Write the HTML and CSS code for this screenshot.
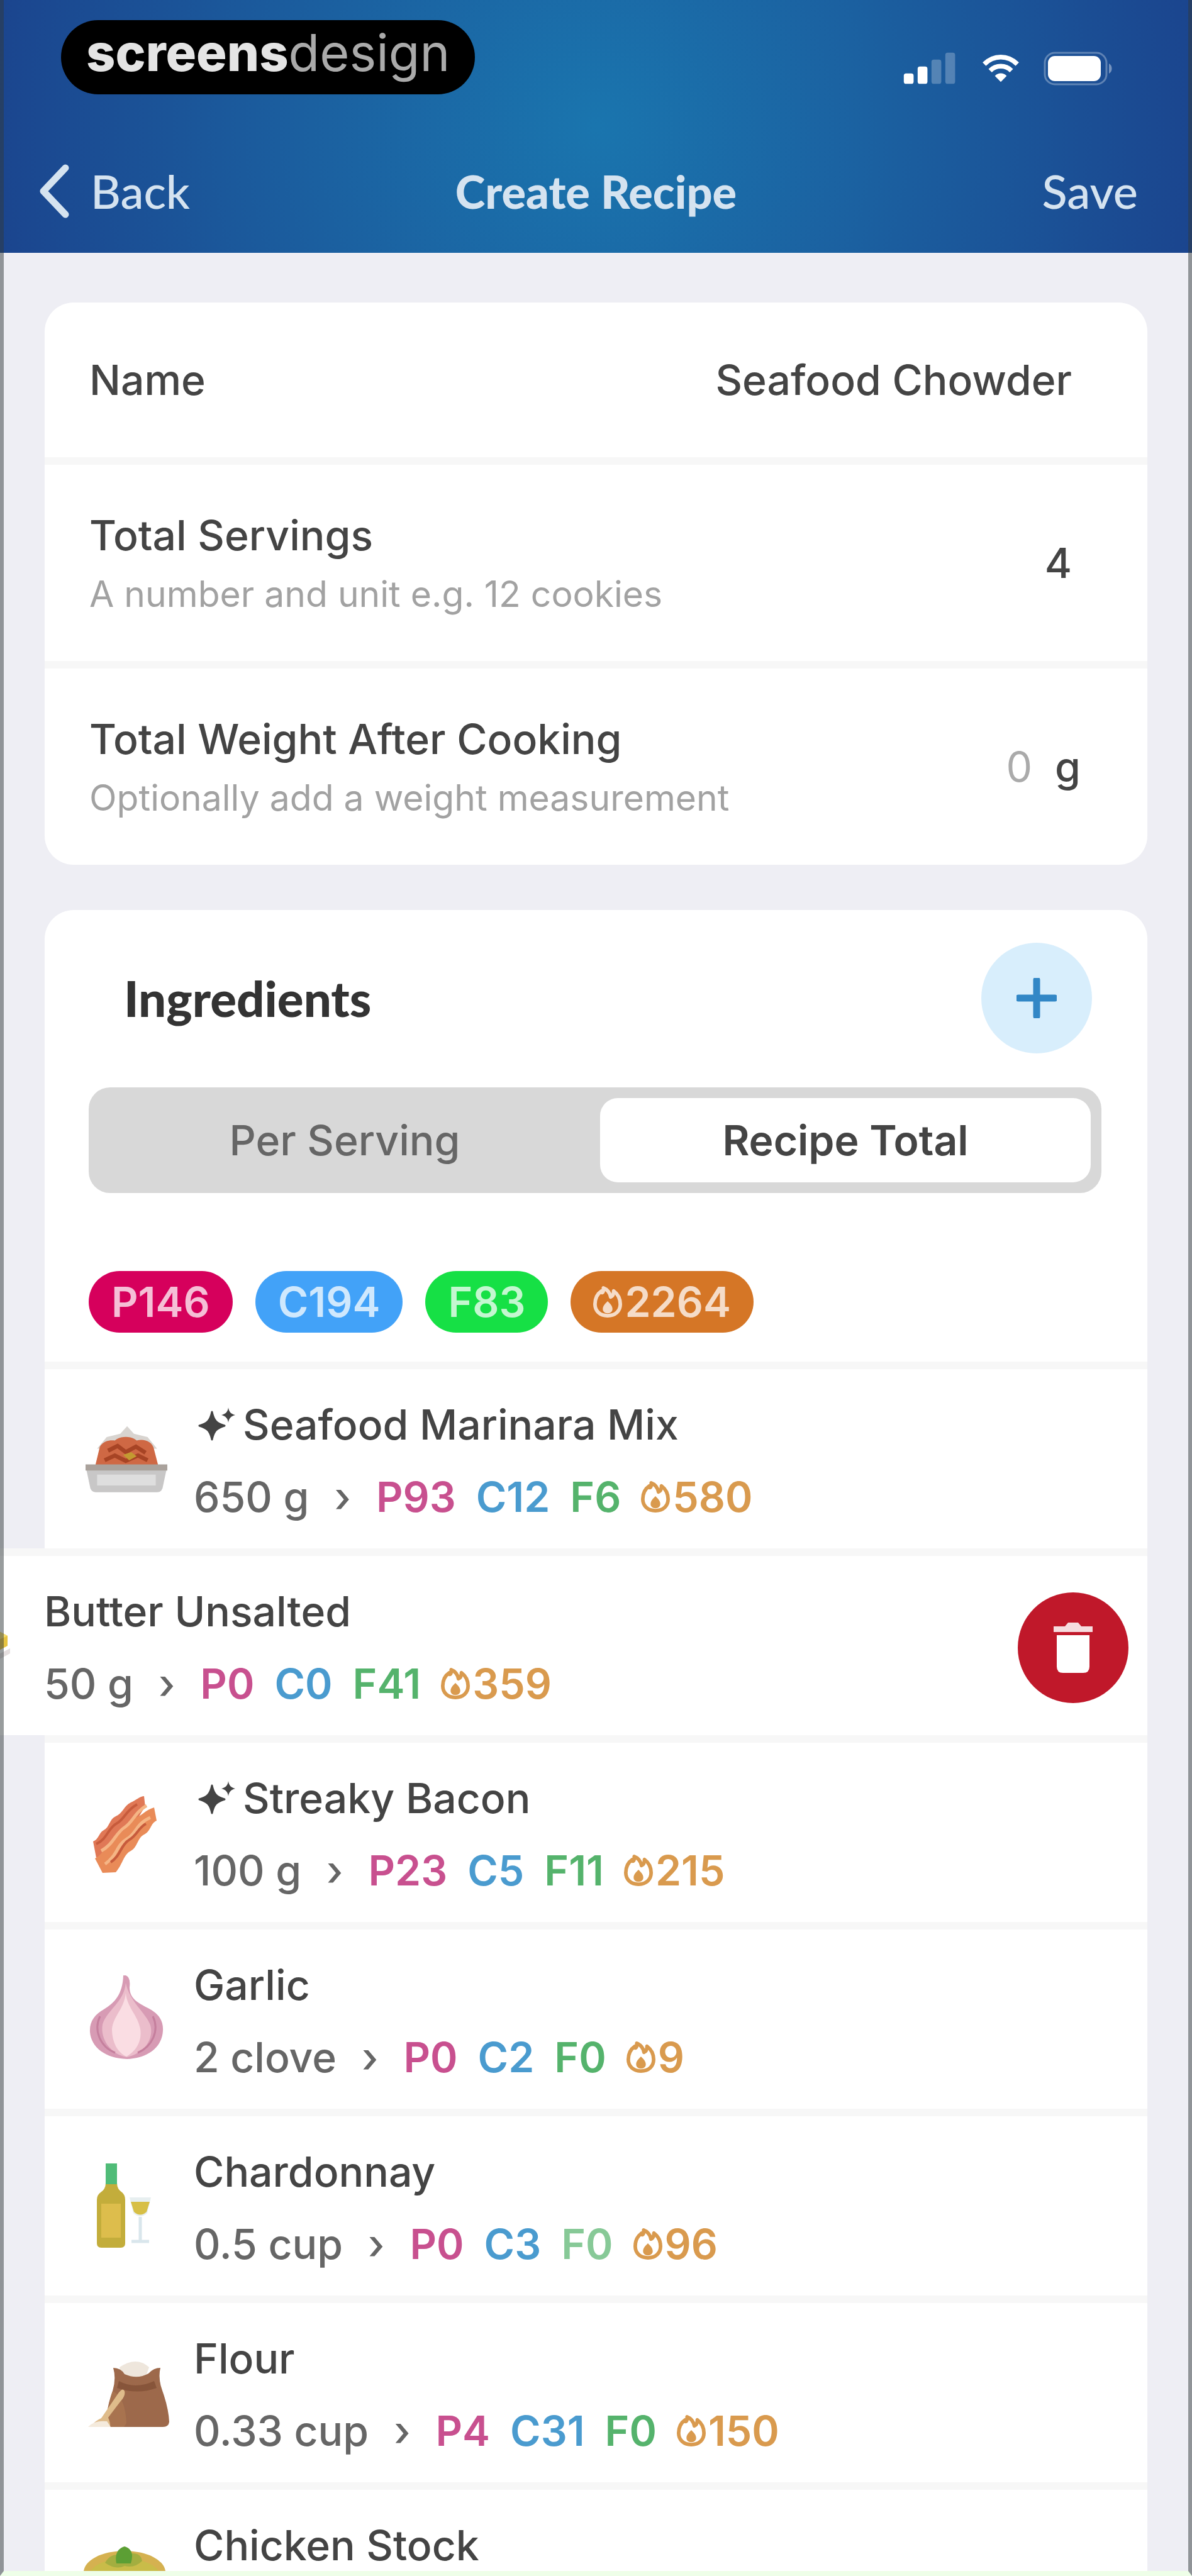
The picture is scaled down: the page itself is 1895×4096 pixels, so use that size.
FILE: index.html
```html
<!DOCTYPE html>
<html lang="en">
<head>
  <meta charset="UTF-8" />
  <meta name="viewport" content="width=device-width, initial-scale=1.0" />
  <title>Create Recipe</title>
  <link rel="stylesheet" href="styles.css">
</head>
<body>
  <!-- shared icons -->
  <svg class="sprite" aria-hidden="true">
    <symbol id="kcal" viewBox="0 0 48 52">
      <path d="M14 8C5 14 3 22 3 30c0 11 8 19 21 19s21-8 21-19c0-8-3-16-11-22 0 6-2 9-5 10C28 11 23 5 17 3c1 8-4 10-3 5z" fill="none" stroke="currentColor" stroke-width="6" stroke-linejoin="round" />
      <path d="M24 25c-5 5-8 8-8 13 0 4 3 7 8 7s8-3 8-7c0-5-3-8-8-13z" fill="currentColor" />
    </symbol>
    <symbol id="sparkle" viewBox="0 0 64 56">
      <path d="M25 8c3 14 7 18 20 22-13 4-17 8-20 22-3-14-7-18-20-22 13-4 17-8 20-22z" fill="currentColor" stroke="currentColor" stroke-width="3" stroke-linejoin="round" />
      <path d="M51 1c1 7 4 10 11 12-7 2-10 5-11 12-1-7-4-10-11-12 7-2 10-5 11-12z" fill="currentColor" />
    </symbol>
  </svg>

  <div class="screen">
    <header class="header">
      <div class="status-bar">
        <div class="logo"><b>screens</b><span>design</span></div>
        <div class="status-icons">
          <svg width="88" height="55" viewBox="0 0 96 60" fill="#fff">
            <rect x="2" y="38" width="17" height="18" rx="4" />
            <rect x="26" y="26" width="17" height="30" rx="4" />
            <rect x="50" y="14" width="17" height="42" rx="4" opacity=".25" />
            <rect x="74" y="2" width="17" height="54" rx="4" opacity=".25" />
          </svg>
          <svg width="60" height="47" viewBox="0 0 64 50" fill="none" stroke="#fff" stroke-width="8">
            <path d="M4 17C20 1 44 1 60 17" />
            <path d="M14 28c10-10 26-10 36 0" />
            <path d="M22 37c6-6 14-6 20 0L32 47z" fill="#fff" stroke="none" />
          </svg>
          <svg width="112" height="54" viewBox="0 0 112 54">
            <rect x="2" y="2" width="98" height="50" rx="16" fill="none" stroke="#fff" stroke-width="3" opacity=".3" />
            <rect x="7" y="7" width="84" height="40" rx="11" fill="#fff" />
            <path d="M104 19c6 3 6 13 0 16z" fill="#fff" opacity=".4" />
          </svg>
        </div>
      </div>
      <nav class="nav">
        <button class="nav-btn back">
          <svg width="52" height="88" viewBox="0 0 52 88"><path d="M44 7L9 44l35 37" fill="none" stroke="currentColor" stroke-width="11" stroke-linecap="round" stroke-linejoin="round" /></svg>
          Back
        </button>
        <h1>Create Recipe</h1>
        <button class="nav-btn save">Save</button>
      </nav>
    </header>

    <main>
      <form class="card">
        <div class="field">
          <label for="name">Name</label>
          <input id="name" type="text" value="Seafood Chowder">
        </div>
        <div class="field">
          <label for="servings">Total Servings<small>A number and unit e.g. 12 cookies</small></label>
          <input id="servings" class="short" type="text" value="4">
        </div>
        <div class="field with-unit">
          <label for="weight">Total Weight After Cooking<small>Optionally add a weight measurement</small></label>
          <input id="weight" class="short" type="text" placeholder="0">
          <span class="unit">g</span>
        </div>
      </form>

      <section class="card">
        <div class="card-head">
          <h2>Ingredients</h2>
          <button class="add-btn" aria-label="Add ingredient">
            <svg width="64" height="64" viewBox="0 0 64 64"><path d="M32 3v58M3 32h58" stroke="currentColor" stroke-width="11" stroke-linecap="round" /></svg>
          </button>
        </div>

        <div class="segmented">
          <button>Per Serving</button>
          <button class="active">Recipe Total</button>
        </div>

        <div class="totals">
          <span class="pill bg-p">P146</span>
          <span class="pill bg-c">C194</span>
          <span class="pill bg-f">F83</span>
          <span class="pill bg-e"><svg class="kcal"><use href="#kcal" /></svg>2264</span>
        </div>

        <ul class="ingredients">
          <li>
            <svg class="food" viewBox="5 8 120 120">
              <path d="M22 50L36 33 56 28 66 17l10 11 20 5 14 17z" fill="#d8d4d0" />
              <path d="M19 76l7-29c5-9 16-10 22-9 8-7 24-7 32 0 12-3 22 2 25 11l7 27z" fill="#cf6844" />
              <path d="M38 53l14-7 12 9 15-8 14 9M33 67l15-7 16 8 18-8 14 7" fill="none" stroke="#a74425" stroke-width="6" />
              <path d="M60 59l12-4 8 6-11 6z" fill="#c39a31" />
              <path d="M5 75h120l-7 33q-2 6-8 6H20q-6 0-8-6z" fill="#c8c7c7" />
              <path d="M5 73h120v9H5z" fill="#aaa29c" />
              <path d="M22 88h86v16H22z" fill="#dedede" />
            </svg>
            <div class="info">
              <h3><svg class="sparkle"><use href="#sparkle" /></svg>Seafood Marinara Mix</h3>
              <p>650 g <i>›</i> <span class="p">P93</span> <span class="c">C12</span> <span class="f">F6</span> <span class="e"><svg class="kcal"><use href="#kcal" /></svg>580</span></p>
            </div>
          </li>
          <li class="swiped">
            <svg class="food" viewBox="0 0 130 130">
              <path d="M8 50l60-28 46 24v16L52 94 8 72z" fill="#e6c33f" />
              <path d="M8 50l60-28 46 24-62 28z" fill="#f5dc6b" />
              <path d="M4 78l48 22 66-34v8l-66 36L4 86z" fill="#e5dfdf" />
            </svg>
            <div class="info">
              <h3>Butter Unsalted</h3>
              <p>50 g <i>›</i> <span class="p">P0</span> <span class="c">C0</span> <span class="f">F41</span> <span class="e"><svg class="kcal"><use href="#kcal" /></svg>359</span></p>
            </div>
            <button class="delete-btn" aria-label="Delete">
              <svg width="72" height="88" viewBox="0 0 72 88" fill="#fff">
                <path d="M5 10h18l5-6h16l5 6h18v9H5z" opacity=".85" />
                <path d="M10 24h52v50q0 10-10 10H20q-10 0-10-10z" />
              </svg>
            </button>
          </li>
          <li>
            <svg class="food" viewBox="0 0 130 130">
              <path d="M12 76c9-3 9-14 17-18 9-4 9-18 19-22 11-4 13-17 24-22 9-4 15-10 21-10l2 18c-8 7-9 18-19 22-10 5-10 19-20 24-10 6-10 18-22 26L17 102z" fill="#e07856" />
              <path d="M15 103c9-4 13-14 22-19 9-6 9-17 19-22 10-6 12-18 22-23 12-4 17-13 31-17l4 21c-10 4-9 17-20 22-11 6-10 20-21 26-12 6-12 20-24 34l-21 1z" fill="#e98b58" />
              <path d="M25 91c20-11 22-28 38-38 13-9 15-23 34-34M31 112c21-15 17-29 35-40 16-10 14-24 37-34" fill="none" stroke="#f5b585" stroke-width="5" />
              <path d="M17 80c18-8 18-25 33-33 12-7 14-20 32-30M40 109c16-10 16-28 30-36 12-7 14-19 26-25" fill="none" stroke="#c75b3c" stroke-width="4" />
            </svg>
            <div class="info">
              <h3><svg class="sparkle"><use href="#sparkle" /></svg>Streaky Bacon</h3>
              <p>100 g <i>›</i> <span class="p">P23</span> <span class="c">C5</span> <span class="f">F11</span> <span class="e"><svg class="kcal"><use href="#kcal" /></svg>215</span></p>
            </div>
          </li>
          <li>
            <svg class="food" viewBox="0 0 130 130">
              <path d="M64 -8q8 3 6 19c0 20 17 26 33 35 14 8 21 19 20 34-1 25-23 44-57 45-35-1-57-19-59-43-1-17 8-28 22-36 17-10 30-24 31-54z" fill="#d79bb4" />
              <path d="M64 4c-3 31-30 43-37 66-4 23 13 48 39 52 29-7 43-30 37-51-8-21-33-37-39-67z" fill="#ebbdcb" />
              <path d="M64 20c-3 26-19 35-22 57 0 21 9 38 23 44 16-9 25-25 22-44-4-22-21-34-23-57z" fill="#fadde3" />
              <path d="M23 57c-11 23 1 49 24 58M107 57c11 23-1 48-24 58" fill="none" stroke="#c57f9d" stroke-width="3" />
            </svg>
            <div class="info">
              <h3>Garlic</h3>
              <p>2 clove <i>›</i> <span class="p">P0</span> <span class="c">C2</span> <span class="f">F0</span> <span class="e"><svg class="kcal"><use href="#kcal" /></svg>9</span></p>
            </div>
          </li>
          <li>
            <svg class="food" viewBox="0 0 130 130">
              <path d="M32 -3h18v28q0 10 8 15 5 4 5 12v69q0 7-7 7H25q-7 0-7-7V52q0-8 6-12 8-5 8-15z" fill="#c3ad3b" />
              <path d="M32 -6h18v33H32z" fill="#50bc78" />
              <path d="M25 58h31v54H25z" fill="#ddbd4c" />
              <path d="M70 48h34l-6 25q-11 10-22 0z" fill="#e7eff0" />
              <path d="M72 55h30l-5 16q-10 9-20 0z" fill="#d7bf46" />
              <path d="M87 79v37M73 118h28" stroke="#d9e6ec" stroke-width="5" />
            </svg>
            <div class="info">
              <h3>Chardonnay</h3>
              <p>0.5 cup <i>›</i> <span class="p">P0</span> <span class="c">C3</span> <span class="f faded">F0</span> <span class="e"><svg class="kcal"><use href="#kcal" /></svg>96</span></p>
            </div>
          </li>
          <li>
            <svg class="food" viewBox="0 0 130 130">
              <path d="M54 21q27-18 47 0l-6 17H58z" fill="#eee6dc" />
              <path d="M44 22q12 0 18 10 20 9 38-1 8-9 19-9-4 17 3 36 10 28 11 50-1 8-10 8H42q-9-1-9-10 1-23 10-47 6-20 1-37z" fill="#9d694b" />
              <path d="M53 43q26 14 56 0l4 11q-30 11-63 0z" fill="#87553a" />
              <path d="M43 59q20 9 22 51l-4 6H36q-5-20 7-57z" fill="#a8734f" />
              <path d="M8 116q7-10 17-14L51 64q8-12 11-5 2 8-7 17l-19 25q4 10 3 15z" fill="#dfbc8b" />
              <path d="M4 116q10-11 30-9l6 9z" fill="#f4eadc" />
            </svg>
            <div class="info">
              <h3>Flour</h3>
              <p>0.33 cup <i>›</i> <span class="p">P4</span> <span class="c">C31</span> <span class="f">F0</span> <span class="e"><svg class="kcal"><use href="#kcal" /></svg>150</span></p>
            </div>
          </li>
          <li>
            <svg class="food" viewBox="0 0 130 130">
              <ellipse cx="62" cy="50" rx="65" ry="34" fill="#d5b150" />
              <ellipse cx="62" cy="56" rx="56" ry="28" fill="#c9bc49" />
              <path d="M31 35q9-16 24-12 6-14 18-3 15-1 17 12-12 12-28 8-14 7-31-5z" fill="#a3ae40" />
              <path d="M49 36q-4-22 13-27 17 5 10 27z" fill="#5c9f34" />
            </svg>
            <div class="info">
              <h3>Chicken Stock</h3>
            </div>
          </li>
        </ul>
      </section>
    </main>
  </div>
</body>
</html>
```
FILE: styles.css
```css
* {
  box-sizing: border-box;
}
body {
  margin: 0;
  font-family: Inter, 'Liberation Sans', sans-serif;
  font-size: 66px;
  font-weight: 500;
  color: #444;
}
h1, h2, h3, p, ul {
  margin: 0;
  padding: 0;
}
button, input {
  font: inherit;
  color: inherit;
  border: none;
  padding: 0;
  background: none;
}
button {
  cursor: pointer;
}
svg {
  flex: none;
}
.sprite {
  position: absolute;
  width: 0;
  height: 0;
}
.screen {
  position: relative;
  height: 100vh;
  overflow: hidden;
  background: #eeeef4;
}
/* thin device edge, lies over everything */
.screen::after {
  content: "";
  position: absolute;
  inset: 0;
  border: 6px solid rgba(50, 58, 60, 0.5);
  border-top: none;
  border-bottom: 8px solid #eeffe8;
  pointer-events: none;
}

/* header */
.header {
  height: 402px;
  padding: 32px 88px 0 97px;
  background: radial-gradient(circle 1000px at 50% 50%, #1a75ae, #1b60a0 45%, #1b438d);
  color: #fff;
}
.status-bar {
  display: flex;
  justify-content: space-between;
}
.logo {
  height: 118px;
  padding: 0 40px;
  border-radius: 59px;
  background: #000;
  font-size: 81px;
  line-height: 104px;
}
.logo b {
  font-weight: 800;
  color: #e4e4e4;
}
.logo span {
  font-weight: 400;
  color: #aaa;
}
.status-icons {
  display: flex;
  align-items: center;
  gap: 38px;
  padding-top: 36px;
  height: 118px;
  margin-right: 36px;
}
.nav {
  display: grid;
  grid-template-columns: 1fr auto 1fr;
  align-items: center;
  margin: 102px -28px 0 -37px;
  font-family: Lato, sans-serif;
  color: #d5e3f0;
}
.nav h1 {
  font-size: 72px;
  line-height: 104px;
  font-weight: 900;
}
.nav-btn {
  display: flex;
  align-items: center;
  gap: 32px;
  font-size: 74px;
  line-height: 104px;
  font-weight: 500;
}
.save {
  justify-self: end;
  padding-right: 26px;
}

/* cards */
main {
  display: flex;
  flex-direction: column;
  gap: 72px;
  padding: 79px 71px 0;
}
.card {
  border-radius: 46px;
  background: #fff;
}
.field {
  display: flex;
  align-items: center;
  gap: 36px;
  min-height: 246px;
  padding: 62px 120px 62px 71px;
}
.field + .field {
  border-top: 12px solid #f7f7f7;
}
.field label {
  flex: 1;
  white-space: nowrap;
  line-height: 100px;
}
.field small {
  display: block;
  font-size: 57px;
  line-height: 88px;
  font-weight: 400;
  color: #a2a2a2;
}
.field input {
  width: 50%;
  text-align: right;
  outline: none;
}
.field .short {
  width: 120px;
}
.field ::placeholder {
  color: #aaa;
  font-weight: 400;
}
.with-unit {
  padding-right: 106px;
}

/* ingredients */
.card-head {
  display: flex;
  align-items: center;
  justify-content: space-between;
  padding: 52px 88px 54px 126px;
}
.card-head h2 {
  font-family: Lato, sans-serif;
  font-size: 78px;
  font-weight: 900;
  color: #333;
}
.add-btn, .delete-btn {
  display: flex;
  align-items: center;
  justify-content: center;
  width: 176px;
  height: 176px;
  border-radius: 50%;
}
.add-btn {
  background: #d8eefc;
  color: #3287c6;
}
.segmented {
  display: flex;
  gap: 16px;
  height: 168px;
  margin: 0 73px 0 70px;
  padding: 17px;
  border-radius: 34px;
  background: #d8d8d8;
}
.segmented button {
  flex: 1;
  border-radius: 28px;
  color: #666;
}
.segmented .active {
  background: #fff;
  color: #444;
  font-weight: 600;
}
.totals {
  display: flex;
  gap: 36px;
  padding: 124px 70px 46px;
}
.pill {
  display: flex;
  align-items: center;
  height: 98px;
  padding: 0 36px;
  border-radius: 49px;
  font-weight: 600;
  color: rgba(255, 255, 255, 0.75);
}
.bg-p { background: #d6005c; }
.bg-c { background: #42a2f8; }
.bg-f { background: #16e045; }
.bg-e { background: #d57626; }
.kcal {
  width: 46px;
  height: 50px;
  margin-right: 4px;
}
.ingredients {
  list-style: none;
}
.ingredients li {
  display: flex;
  align-items: center;
  height: 297px;
  padding: 6px 30px 0 65px;
  border-top: 12px solid #f7f7f7;
  background: #fff;
}
/* row pulled left to uncover the delete button */
.ingredients .swiped {
  margin-left: -238px;
}
.food {
  width: 130px;
  height: 130px;
  margin-right: 42px;
  overflow: visible;
}
.info {
  flex: 1;
  height: 230px;
  white-space: nowrap;
}
.info h3, .info p {
  display: flex;
  align-items: center;
  font-size: 66px;
  line-height: 115px;
  font-weight: 500;
}
.info p {
  gap: 32px;
  color: #666;
}
.info i {
  margin: 0 8px;
  font-style: normal;
}
.sparkle {
  width: 64px;
  height: 56px;
  margin: 0 10px 0 4px;
}
.info span {
  display: flex;
  align-items: center;
  font-weight: 600;
}
.p { color: #c8508f; }
.c { color: #4a9bcf; }
.f { color: #55b36c; }
.e { color: #d99a4e; }
.faded { opacity: 0.7; }
.delete-btn {
  background: #c0182a;
}
```
